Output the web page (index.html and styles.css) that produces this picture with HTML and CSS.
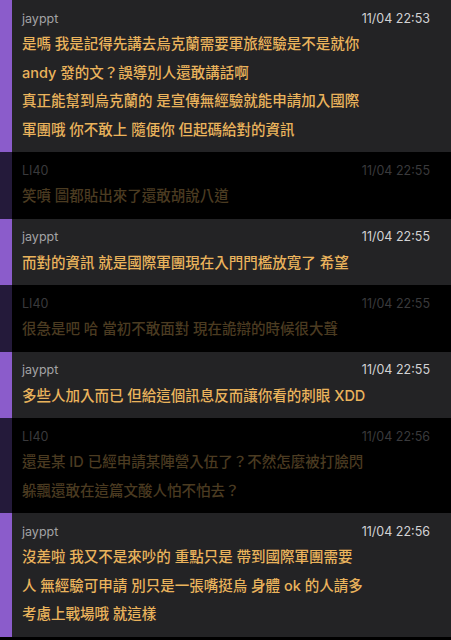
FILE: index.html
```html
<!DOCTYPE html>
<html lang="zh-Hant">
<head>
<meta charset="utf-8">
<link rel="stylesheet" href="styles.css">
</head>
<body>
<div class="list">
  <div class="msg mine">
    <div class="bar"></div>
    <div class="body">
      <div class="head"><span class="name">jayppt</span><span class="time">11/04 22:53</span></div>
      <div class="text">是嗎 我是記得先講去烏克蘭需要軍旅經驗是不是就你<br>andy 發的文？誤導別人還敢講話啊<br>真正能幫到烏克蘭的 是宣傳無經驗就能申請加入國際<br>軍團哦 你不敢上 隨便你 但起碼給對的資訊</div>
    </div>
  </div>
  <div class="msg other">
    <div class="bar"></div>
    <div class="body">
      <div class="head"><span class="name">LI40</span><span class="time">11/04 22:55</span></div>
      <div class="text">笑噴 圖都貼出來了還敢胡說八道</div>
    </div>
  </div>
  <div class="msg mine">
    <div class="bar"></div>
    <div class="body">
      <div class="head"><span class="name">jayppt</span><span class="time">11/04 22:55</span></div>
      <div class="text">而對的資訊 就是國際軍團現在入門門檻放寬了 希望</div>
    </div>
  </div>
  <div class="msg other">
    <div class="bar"></div>
    <div class="body">
      <div class="head"><span class="name">LI40</span><span class="time">11/04 22:55</span></div>
      <div class="text">很急是吧 哈 當初不敢面對 現在詭辯的時候很大聲</div>
    </div>
  </div>
  <div class="msg mine">
    <div class="bar"></div>
    <div class="body">
      <div class="head"><span class="name">jayppt</span><span class="time">11/04 22:55</span></div>
      <div class="text">多些人加入而已 但給這個訊息反而讓你看的刺眼 XDD</div>
    </div>
  </div>
  <div class="msg other">
    <div class="bar"></div>
    <div class="body">
      <div class="head"><span class="name">LI40</span><span class="time">11/04 22:56</span></div>
      <div class="text">還是某 ID 已經申請某陣營入伍了？不然怎麼被打臉閃<br>躲飄還敢在這篇文酸人怕不怕去？</div>
    </div>
  </div>
  <div class="msg mine">
    <div class="bar"></div>
    <div class="body">
      <div class="head"><span class="name">jayppt</span><span class="time">11/04 22:56</span></div>
      <div class="text">沒差啦 我又不是來吵的 重點只是 帶到國際軍團需要<br>人 無經驗可申請 別只是一張嘴挺烏 身體 ok 的人請多<br>考慮上戰場哦 就這樣</div>
    </div>
  </div>
</div>
</body>
</html>
```

FILE: styles.css
```css
html, body {
  margin: 0;
  padding: 0;
  background: #000;
}
body {
  width: 451px;
  height: 640px;
  overflow: hidden;
  font-family: "Inter", "Noto Sans CJK TC", sans-serif;
}
.list {
  display: flex;
  flex-direction: column;
}
.msg {
  display: flex;
}
.bar {
  width: 12px;
  flex: none;
}
.body {
  flex: 1;
  padding: 8px 21px 8px 10px;
}
.head {
  display: flex;
  justify-content: space-between;
  align-items: center;
  height: 20px;
  margin-bottom: 2px;
}
.name {
  font-size: 12.5px;
}
.time {
  font-size: 12.5px;
}
.text {
  font-size: 14.5px;
  line-height: 28.5px;
  font-weight: 500;
  white-space: nowrap;
}
.mine {
  background: #232325;
}
.mine .bar {
  background: #8b5ccb;
}
.mine .name {
  color: #a3a3a6;
}
.mine .time {
  color: #d2d2d4;
}
.mine .text {
  color: #eab35c;
}
.other {
  background: #000;
}
.other .bar {
  background: #241a3a;
}
.other .name,
.other .time {
  color: #3a3a3c;
}
.other .text {
  color: #4b3b21;
}
```
